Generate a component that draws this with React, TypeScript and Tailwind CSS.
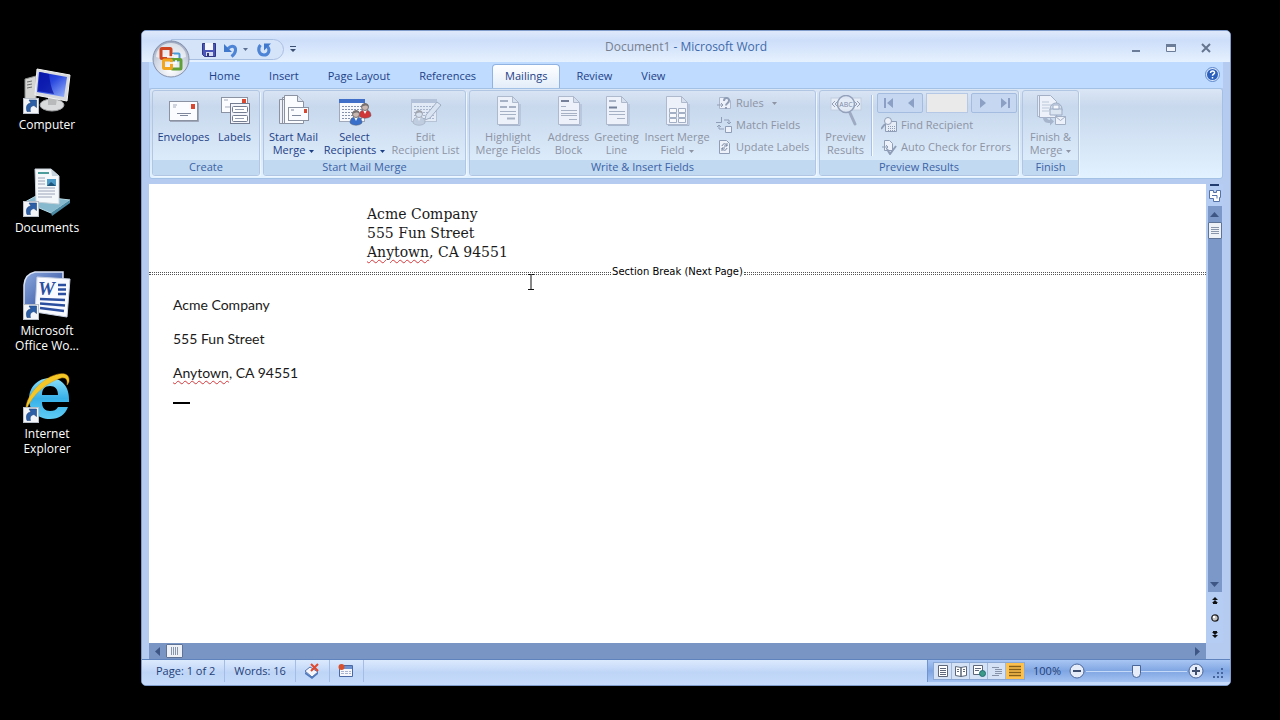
import type { ReactNode } from "react";

const tabs = ["Home", "Insert", "Page Layout", "References", "Mailings", "Review", "View"];

/* ---------- Desktop icons ---------- */

const desktop = { width: 48, height: 52, viewBox: "0 -4 48 52" };

function ShortcutArrow() {
  return (
    <g>
      <rect x="0.5" y="30.5" width="15" height="15" fill="#f2f4f8" stroke="#b9bfc9" />
      <path d="M4 43.500c-1.500-5 0-8 4-8.500l-2-3 7.500 0v7.500l-2.500-2c-3 .5-4.500 2.500-3.500 6z" fill="#2d5fa6" stroke="#1c4480" strokeWidth=".6" />
    </g>
  );
}

function ComputerIcon() {
  return (
    <svg {...desktop}>
      <defs>
        <linearGradient id="screen" x1="0" y1="0" x2="1" y2="1">
          <stop offset="0" stopColor="#0b1cc4" />
          <stop offset=".45" stopColor="#2a49df" />
          <stop offset="1" stopColor="#9db8fb" />
        </linearGradient>
      </defs>
      <path d="M2 11l11-3v28l-11 2z" fill="#d5d6d4" stroke="#8c8e8e" />
      <path d="M4 14l5-1M4 17l5-1M4 20l5-1" stroke="#6d6f70" />
      <ellipse cx="29" cy="37" rx="12" ry="6" fill="#d9dadb" stroke="#9fa1a3" />
      <path d="M25 28l9 2-1 7h-8z" fill="#b7b9bb" />
      <path d="M14 1l33 6-3 26-32-6z" fill="#d8dadd" stroke="#f4f4f4" />
      <path d="M16 4l28 5-3 20-27-5z" fill="url(#screen)" />
      <path d="M17 4l9 2c1 8 2 14 5 20l-16-3z" fill="#0711a0" opacity=".75" />
      <ShortcutArrow />
    </svg>
  );
}

function DocumentsIcon() {
  return (
    <svg {...desktop}>
      <g transform="translate(0 -3)">
        <path d="M2 34l11-6 34 4-19 13z" fill="#86b9cd" stroke="#b6dbe8" />
        <path d="M28 45l19-13v3l-18 13z" fill="#4c8ba6" />
        <path d="M12 1h16l8 7v28l-23-2z" fill="#f5f8fb" stroke="#c5d0d9" />
        <path d="M28 1l1 7h7z" fill="#c4d2dd" />
        <path d="M15 5h11" stroke="#4d9c9c" strokeWidth="2" />
        <path d="M15 10h7M15 13h7M15 16h7M15 20h17M15 23h17M15 26h17M15 29h14" stroke="#9aa4b8" />
        <rect x="24" y="11" width="9" height="7" fill="#4c9ac8" />
        <path d="M24 18l4-4 5 4z" fill="#1e5578" />
      </g>
      <ShortcutArrow />
    </svg>
  );
}

function WordIcon() {
  return (
    <svg {...desktop}>
      <defs>
        <linearGradient id="wordBack" x1="0" y1="0" x2="1" y2="1">
          <stop offset="0" stopColor="#8ea9df" />
          <stop offset="1" stopColor="#1d3f91" />
        </linearGradient>
      </defs>
      <g transform="translate(0 -3)">
        <path d="M12 1h28v40H1V14Q2 3 12 1z" fill="url(#wordBack)" stroke="#dbe4f5" strokeWidth="1.5" />
        <path d="M14 6l33 2-3 38-32-5z" fill="#f8faff" stroke="#c6d0e2" />
        <text x="15" y="24" fontFamily="Liberation Serif, serif" fontWeight="700" fontStyle="italic" fontSize="19" fill="#2b4f9e">W</text>
        <path d="M35 14h8M35 18.500h8M35 23h8M17 28l25 1M17 32.500l25 2M17 37l24 3" stroke="#2b4f9e" strokeWidth="2.5" />
      </g>
      <ShortcutArrow />
    </svg>
  );
}

function ExplorerIcon() {
  return (
    <svg {...desktop}>
      <defs>
        <linearGradient id="ie" x1="0" y1="0" x2="0" y2="1">
          <stop offset="0" stopColor="#8ae0fb" />
          <stop offset=".5" stopColor="#37b0e8" />
          <stop offset="1" stopColor="#5fcdf5" />
        </linearGradient>
      </defs>
      <g transform="translate(0 -4)">
        <path d="M46 29H19c0 6 3 9 8 9 4 0 6-1 8-4h10c-3 8-9 12-18 12C15 46 6 38 6 26S15 5 27 5s20 9 19 24zM19 22h16c0-6-3-9-8-9s-8 3-8 9z" fill="url(#ie)" />
        <path d="M3 37C2 27 12 12 27 4c10-5 20-5 19 4 0 1-1 3-2 4 1-5-1-8-6-7C25 9 10 20 3 37z" fill="#f5c726" stroke="#d99a12" strokeWidth=".5" />
      </g>
      <ShortcutArrow />
    </svg>
  );
}

function DesktopIcon({ icon, children }: { icon: ReactNode; children: ReactNode }) {
  return (
    <button className="flex h-[103px] w-[94px] flex-col items-center text-[12px] leading-[15px] text-white">
      {icon}
      <span className="mt-px">{children}</span>
    </button>
  );
}

/* ---------- Ribbon icons ---------- */

function EnvelopeIcon() {
  return (
    <svg width="32" height="32" viewBox="0 0 32 32">
      <rect x="1.5" y="6.5" width="28" height="19" fill="#fbfcff" stroke="#8b93a3" />
      <path d="M2 26.500h28.500V8" fill="none" stroke="#7e8696" opacity=".6" />
      <path d="M5 10h4M5 12h3" stroke="#a3abbb" />
      <rect x="23" y="9" width="4" height="5" fill="#d9472f" />
      <path d="M9 18.500h14M12 20.500h8" stroke="#7e879b" />
    </svg>
  );
}

function LabelsIcon() {
  return (
    <svg width="32" height="32" viewBox="0 0 32 32">
      <rect x="2.5" y="2.5" width="26" height="15" fill="#fbfcff" stroke="#8b93a3" />
      <rect x="23" y="4" width="4" height="4" fill="#d9472f" />
      <path d="M5 5h4M6 12h5" stroke="#a3abbb" />
      <rect x="11.5" y="8.5" width="19" height="20" fill="#f3f5fb" stroke="#737c90" />
      <rect x="13.5" y="11.5" width="15" height="6" rx="1" fill="#fff" stroke="#737c90" />
      <rect x="13.5" y="20.5" width="15" height="6" rx="1" fill="#fff" stroke="#737c90" />
      <path d="M16 14.500h9M16 23.500h9" stroke="#959eb0" />
    </svg>
  );
}

function MergeIcon() {
  return (
    <svg width="32" height="32" viewBox="0 0 32 32">
      <path d="M1.500 4.500h6v24h-6zM4.500 2.500h6v26h-6z" fill="#eef2f8" stroke="#8b93a3" />
      <path d="M6.500.5h13l6 6v22h-19z" fill="#fbfcff" stroke="#8b93a3" />
      <path d="M19.500.5v6h6" fill="#dbe3ee" stroke="#8b93a3" />
      <rect x="10.5" y="12.5" width="20" height="13" fill="#fbfcff" stroke="#8b93a3" />
      <rect x="26" y="14" width="3" height="4" fill="#d9472f" />
      <path d="M14 20.500h9M13 15h3" stroke="#7e879b" />
    </svg>
  );
}

function Person({ x, y, shirt, head }: { x: number; y: number; shirt: string; head: string }) {
  return (
    <g transform={`translate(${x} ${y})`}>
      <path d="M0 13C0 8 3 7 6 7s6 1 6 6c-3 3-9 3-12 0z" fill={shirt} stroke="#5b6273" strokeWidth=".5" />
      <path d="M4 7l2 4 2-4z" fill="#fff" />
      <circle cx="6" cy="4" r="3.5" fill={head} stroke="#5d5a5c" strokeWidth=".8" />
      <path d="M2.500 4C2 0 10-1 9.500 4 8 2 5 2 2.500 4z" fill="#77706e" />
    </g>
  );
}

function TableSheet({ bar }: { bar: string }) {
  return (
    <g>
      <rect x="1.5" y="4.5" width="25" height="22" fill="#f7f9fd" stroke="#a0a9ba" />
      <rect x="1" y="4" width="26" height="4" fill={bar} />
      <path d="M4 11.500h20M4 14.500h20M4 17.500h20M4 20.500h20M4 23.500h20" stroke="#8591ac" strokeDasharray="2 1" />
    </g>
  );
}

function RecipientsIcon() {
  return (
    <svg width="34" height="32" viewBox="0 0 34 32">
      <TableSheet bar="#3f6fc8" />
      <Person x={21} y={8} shirt="#cf3638" head="#c9b8b2" />
      <Person x={12} y={15} shirt="#376fcb" head="#c9b8b2" />
    </svg>
  );
}

function EditListIcon() {
  return (
    <svg width="32" height="32" viewBox="0 0 32 32" opacity=".5">
      <TableSheet bar="#9aa9c4" />
      <Person x={3} y={15} shirt="#b3bed2" head="#e3e8f0" />
      <path d="M16 20l11-13 4 3-11 13-5 2z" fill="#e9eef6" stroke="#76829a" />
    </svg>
  );
}

function PageIcon({ kind }: { kind: "highlight" | "address" | "greeting" | "insert" }) {
  return (
    <svg width="32" height="32" viewBox="0 0 32 32">
      <path d="M7 30.500h21V9" fill="none" stroke="#8f9db7" opacity=".6" />
      <path d="M5.500 1.500h15l6 6v22h-21z" fill="#edf2fa" stroke="#aeb9cd" />
      <path d="M20.500 1.500v6h6z" fill="#d5dfee" stroke="#aeb9cd" />
      {kind === "highlight" && (
        <g stroke="#a7b1c5">
          <path d="M8 6h8M8 12h7M17 12h7M15 23.500h8" strokeWidth="2" />
          <path d="M8 16.500h16M8 19.500h16" />
        </g>
      )}
      {kind === "address" && (
        <g stroke="#a7b1c5">
          <path d="M8 6h8" stroke="#74809a" strokeWidth="2" />
          <path d="M8 11.500h5M8 15.500h16M8 18.500h16M8 20.500h16M16 24.500h8" />
        </g>
      )}
      {kind === "greeting" && (
        <g stroke="#a7b1c5">
          <path d="M8 6h7" strokeWidth="2" />
          <path d="M8 12.500h8" stroke="#74809a" strokeWidth="2" />
          <path d="M8 16.500h16M8 19.500h16M16 23.500h8" />
        </g>
      )}
      {kind === "insert" && (
        <g fill="#f7f9fd" stroke="#a3afc5">
          <path d="M8.500 13.500h7v4h-7zM17.500 13.500h7v4h-7zM8.500 18.500h7v4h-7zM17.500 18.500h7v4h-7zM8.500 23.500h7v4h-7zM17.500 23.500h7v4h-7z" />
        </g>
      )}
    </svg>
  );
}

function PreviewIcon() {
  return (
    <svg width="32" height="32" viewBox="0 0 32 32">
      <rect x="1" y="3" width="30" height="12" fill="#e6edf7" stroke="#c2cee0" />
      <path d="M5 6l-3 3 3 3M8 6l-3 3 3 3M24 6l3 3-3 3M27 6l3 3-3 3" fill="none" stroke="#93a0b8" />
      <path d="M20 18l5 11" stroke="#9daac2" strokeWidth="3" strokeLinecap="round" />
      <circle cx="16" cy="9" r="8.5" fill="#e2eaf6" fillOpacity=".8" stroke="#93a1bb" strokeWidth="1.5" />
      <text x="16" y="12" textAnchor="middle" fontSize="7" fill="#7d8aa5">ABC</text>
    </svg>
  );
}

function FinishIcon() {
  return (
    <svg width="32" height="32" viewBox="0 0 32 32">
      <path d="M2.500.5h6v21h-6z" fill="#e6edf7" stroke="#a9b6cc" />
      <path d="M4.500.5h11l6 6v16h-17z" fill="#edf2fa" stroke="#a3afc5" />
      <path d="M7 7h7M7 10h10M7 13h7M7 16h7" stroke="#bac5d8" />
      <circle cx="21" cy="14" r="6" fill="#d3deed" stroke="#9cabc4" />
      <path d="M15 14h12v6H15z" fill="#dbe4f1" stroke="#9cabc4" />
      <path d="M18 10h6v4h-6z" fill="#f5f8fc" stroke="#9cabc4" />
      <path d="M20.500 21.500h10v8h-10z" fill="#edf2fa" stroke="#a3afc5" />
      <path d="M20.500 21.500l5 4 5-4" fill="none" stroke="#a3afc5" />
      <path d="M8 22c0 5 3 6 7 6v2.500l4-4-4-4V25c-2 0-3-1-3-3z" fill="#a6b4cc" />
    </svg>
  );
}

const small = { width: 16, height: 16, viewBox: "0 0 16 16", fill: "none", stroke: "#8f9db7" };

function RulesIcon() {
  return (
    <svg {...small}>
      <path d="M3.500 2.500h8l3 3v8h-11z" fill="#edf2fa" stroke="#aab6cb" />
      <path d="M8 6c0-4 5-4 5-.5 0 3-3 2.500-3 5M10 12v2" strokeWidth="2" />
      <path d="M1 10h6M5 8l2 2-2 2" />
    </svg>
  );
}

function MatchIcon() {
  return (
    <svg {...small}>
      <path d="M0 5.500h5.500V0M8 3h5v3M11 5l2 2 2-2M8 12H3V9M1 10l2-2 2 2" />
      <path d="M9.500 9.500h6v6h-6z" fill="#edf2fa" />
    </svg>
  );
}

function UpdateIcon() {
  return (
    <svg {...small}>
      <path d="M3.500 1.500h7l3 3v10h-10z" fill="#edf2fa" />
      <path d="M6 7c1-3 4-3 5 0M11 4v3H8M11 9c-1 3-4 3-5 0M6 12V9h3" stroke="#7685a3" />
    </svg>
  );
}

function FindIcon() {
  return (
    <svg {...small}>
      <path d="M4.500 4.500h11v10h-11z" fill="#e7edf7" />
      <path d="M7 9.500h8M7 11.500h8M7 13.500h8" strokeDasharray="1 1" />
      <circle cx="7" cy="4" r="3.5" fill="#edf2fa" />
      <path d="M4 7l-4 5" strokeWidth="2" />
    </svg>
  );
}

function CheckIcon() {
  return (
    <svg {...small}>
      <path d="M3.500 1.500h5l3 3v7h-8z" fill="#edf2fa" />
      <path d="M1 8h6M5 6l2 2-2 2" />
      <path d="M6 10l3 5 6-8" strokeWidth="2" />
    </svg>
  );
}

function Caret() {
  return (
    <svg className="ml-1 inline-block align-middle" width="5" height="3" viewBox="0 0 5 3">
      <path d="M0 0h5L2.500 3z" fill="currentColor" />
    </svg>
  );
}

/* ---------- Ribbon parts ---------- */

interface BigButtonProps {
  icon: ReactNode;
  lines: string[];
  width: string;
  menu?: boolean;
  disabled?: boolean;
}

function BigButton({ icon, lines, width, menu, disabled }: BigButtonProps) {
  return (
    <button
      disabled={disabled}
      className={`flex shrink-0 flex-col items-center pt-1 leading-[13px] whitespace-nowrap ${width} ${
        disabled ? "text-[#8d94a4]" : "text-[#1d4187]"
      }`}
    >
      {icon}
      <span className="mt-[3px] block">{lines[0]}</span>
      {lines[1] && (
        <span className="block">
          {lines[1]}
          {menu && <Caret />}
        </span>
      )}
    </button>
  );
}

function SmallButton({ icon, label, menu }: { icon: ReactNode; label: string; menu?: boolean }) {
  return (
    <button disabled className="flex h-[22px] items-center gap-1 whitespace-nowrap text-[#8d94a4]">
      {icon}
      <span>{label}</span>
      {menu && <Caret />}
    </button>
  );
}

function Group({ title, width, children }: { title: string; width: string; children: ReactNode }) {
  return (
    <section
      className={`flex shrink-0 flex-col overflow-hidden rounded-[3px] border border-[#b0c6e3] shadow-[1px_1px_0_#eef6ff] ${width}`}
    >
      <div className="flex h-[69px]">{children}</div>
      <h2 className="h-[15px] bg-[#c1d9f1] text-center leading-[14px] text-[#3c63a6]">{title}</h2>
    </section>
  );
}

function NavButton({ label, d }: { label: string; d: string }) {
  return (
    <button disabled aria-label={label} className="flex h-[18px] w-[22px] items-center justify-center">
      <svg width="12" height="12" viewBox="0 0 12 12">
        <path d={d} fill="#8ba0c4" />
      </svg>
    </button>
  );
}

function Ribbon() {
  return (
    <div className="flex h-[91px] gap-[3px] rounded-[3px] border border-[#a3c0e5] bg-linear-to-b from-[#dbe6f5] from-0% via-[#c8d8ed] via-20% to-[#e3f2ff] px-[2px] pt-px pb-[2px]">
      <Group title="Create" width="w-[108px]">
        <BigButton icon={<EnvelopeIcon />} lines={["Envelopes"]} width="w-[61px]" />
        <BigButton icon={<LabelsIcon />} lines={["Labels"]} width="w-[41px]" />
      </Group>
      <Group title="Start Mail Merge" width="w-[203px]">
        <BigButton icon={<MergeIcon />} lines={["Start Mail", "Merge"]} width="w-[59px]" menu />
        <BigButton icon={<RecipientsIcon />} lines={["Select", "Recipients"]} width="w-[63px]" menu />
        <BigButton icon={<EditListIcon />} lines={["Edit", "Recipient List"]} width="w-[79px]" disabled />
      </Group>
      <Group title="Write & Insert Fields" width="w-[347px]">
        <BigButton icon={<PageIcon kind="highlight" />} lines={["Highlight", "Merge Fields"]} width="w-[76px]" disabled />
        <BigButton icon={<PageIcon kind="address" />} lines={["Address", "Block"]} width="w-[45px]" disabled />
        <BigButton icon={<PageIcon kind="greeting" />} lines={["Greeting", "Line"]} width="w-[51px]" disabled />
        <BigButton icon={<PageIcon kind="insert" />} lines={["Insert Merge", "Field"]} width="w-[70px]" menu disabled />
        <div className="ml-1 flex flex-col pt-px">
          <SmallButton icon={<RulesIcon />} label="Rules" menu />
          <SmallButton icon={<MatchIcon />} label="Match Fields" />
          <SmallButton icon={<UpdateIcon />} label="Update Labels" />
        </div>
      </Group>
      <Group title="Preview Results" width="w-[200px]">
        <BigButton icon={<PreviewIcon />} lines={["Preview", "Results"]} width="w-[51px]" disabled />
        <div className="my-1 border-r border-l border-r-white/80 border-l-[#a9c2e2]" />
        <div className="ml-1 flex flex-col pt-px">
          <div className="flex h-[22px] items-center gap-[3px]">
            <div className="flex rounded-[2px] border border-[#a3bce0] bg-[#c6d8f1]">
              <NavButton label="First record" d="M1 1h2v10H1zM10 1v10L4 6z" />
              <NavButton label="Previous record" d="M9 1v10L3 6z" />
            </div>
            <input
              aria-label="Record"
              disabled
              className="h-5 w-[42px] border border-[#b5c9e6] bg-[#eaeaea]"
            />
            <div className="flex rounded-[2px] border border-[#a3bce0] bg-[#c6d8f1]">
              <NavButton label="Next record" d="M3 1v10l6-5z" />
              <NavButton label="Last record" d="M9 1h2v10H9zM2 1v10l6-5z" />
            </div>
          </div>
          <div className="flex flex-col items-start pl-1">
            <SmallButton icon={<FindIcon />} label="Find Recipient" />
            <SmallButton icon={<CheckIcon />} label="Auto Check for Errors" />
          </div>
        </div>
      </Group>
      <Group title="Finish" width="w-[57px]">
        <BigButton icon={<FinishIcon />} lines={["Finish &", "Merge"]} width="w-[55px]" menu disabled />
      </Group>
    </div>
  );
}

/* ---------- Title bar ---------- */

function OfficeButton() {
  return (
    <button aria-label="Office Button" className="absolute top-[9px] left-[10px]">
      <svg width="38" height="38" viewBox="0 0 38 38">
        <defs>
          <radialGradient id="orb" cx=".5" cy=".8" r=".8">
            <stop offset="0" stopColor="#ffffff" />
            <stop offset=".55" stopColor="#d3d9e5" />
            <stop offset="1" stopColor="#9aa6bd" />
          </radialGradient>
        </defs>
        <circle cx="19" cy="19" r="18" fill="url(#orb)" stroke="#8591ab" />
        <path d="M4 17a15 14 0 0 1 30 0q-15 5-30 0z" fill="#fff" opacity=".6" />
        <g fill="none">
          <rect x="20.5" y="13.500" width="7" height="7" rx="1" stroke="#4a9bd9" strokeWidth="2" />
          <rect x="9" y="8.5" width="10" height="10" rx="1" stroke="#cf4420" strokeWidth="3" />
          <rect x="19.5" y="19.5" width="9.5" height="9.5" rx="1" stroke="#5f9f36" strokeWidth="3" />
          <rect x="11.5" y="20" width="8" height="8.500" rx="1" stroke="#f2a51e" strokeWidth="3" />
          <path d="M15 17h6v-3M18 23h6v-3" stroke="#fff" strokeWidth="1.5" />
        </g>
      </svg>
    </button>
  );
}

function TitleBar() {
  return (
    <header className="grid h-[31px] grid-cols-[1fr_auto_1fr] bg-linear-to-b from-[#dfe9fb] from-0% via-[#cddefa] via-30% to-[#e6f1fe] text-[12px]">
      <div className="flex items-center pt-[6px] pl-[29px]">
        <div className="flex h-[21px] items-center rounded-r-full border border-[#a9bfe2] bg-[#d6e4f9] pr-[11px] pl-[29px]">
          <button aria-label="Save">
            <svg width="16" height="16" viewBox="0 0 16 16">
              <path d="M1.500 1.500h13v13h-11l-2-2z" fill="#4a55b8" stroke="#2f3785" />
              <path d="M4 1h8v7H4z" fill="#f4f6fc" />
              <path d="M5 10h7v4H5z" fill="#d7dbee" />
              <path d="M6 11h2v3H6z" fill="#2f3785" />
            </svg>
          </button>
          <button aria-label="Undo" className="ml-[6px]">
            <svg width="16" height="16" viewBox="0 0 16 16">
              <path d="M5 6.500c4-4 8-2 7.500 2-.3 2.500-2 4.500-4 6" fill="none" stroke="#4d84d6" strokeWidth="3" />
              <path d="M1 2v8h8z" fill="#3f78cc" />
            </svg>
          </button>
          <button aria-label="Undo history" className="ml-1 text-[#5b6f93]">
            <svg width="5" height="3" viewBox="0 0 5 3">
              <path d="M0 0h5L2.500 3z" fill="currentColor" />
            </svg>
          </button>
          <button aria-label="Repeat" className="ml-2">
            <svg width="16" height="16" viewBox="0 0 16 16">
              <path d="M4.500 3C1 7 3 13 8 13c4.500 0 6.500-5 3.500-8.500" fill="none" stroke="#4d84d6" strokeWidth="3" />
              <path d="M8 1.500h7L8 8.500z" fill="#3f78cc" />
            </svg>
          </button>
        </div>
        <button aria-label="Customize Quick Access Toolbar" className="ml-[6px]">
          <svg width="6" height="7" viewBox="0 0 6 7" fill="#3b4f73">
            <path d="M0 0h6v1H0zM0 3h6L3 6z" />
          </svg>
        </button>
      </div>
      <h1 className="pt-[7px] leading-[18px] text-[#3e6aaa]">
        <span className="text-[#77808f]">Document1</span> - Microsoft Word
      </h1>
      <div className="flex justify-end pt-[3px] pr-[7px]">
        <button aria-label="Minimize" className="flex w-[35px] items-center justify-center">
          <svg width="12" height="12" viewBox="0 0 12 12"><path d="M2 8h8v2H2z" fill="#6b7c99" /></svg>
        </button>
        <button aria-label="Restore" className="flex w-[35px] items-center justify-center">
          <svg width="12" height="12" viewBox="0 0 12 12"><path d="M1.500 3v6.500h9V3z" fill="#eef3fb" stroke="#6b7c99" /><path d="M1 2h10v3H1z" fill="#6b7c99" /></svg>
        </button>
        <button aria-label="Close" className="flex w-[35px] items-center justify-center">
          <svg width="12" height="12" viewBox="0 0 12 12"><path d="M2 2l8 8M10 2l-8 8" stroke="#66758f" strokeWidth="2" /></svg>
        </button>
      </div>
    </header>
  );
}

function TabRow() {
  return (
    <nav className="flex h-[26px] items-end bg-[#bfdbff] pr-[3px] pl-[47px]">
      {tabs.map((tab) => (
        <a
          key={tab}
          href="#"
          className={`mr-[3px] h-6 rounded-t-[4px] border border-b-0 px-3 leading-[22px] whitespace-nowrap text-[#1d4187] ${
            tab === "Mailings" ? "border-[#90b3e2] bg-linear-to-b from-white to-[#e3edf9]" : "border-transparent"
          }`}
        >
          {tab}
        </a>
      ))}
      <button aria-label="Help" className="mb-[6px] ml-auto">
        <svg width="15" height="15" viewBox="0 0 15 15">
          <circle cx="7.5" cy="7.5" r="7" fill="#dce9fb" stroke="#5c87cc" />
          <circle cx="7.5" cy="7.5" r="5.5" fill="#2c60bd" />
          <path d="M5.500 6c0-3 4.500-2.500 4 0-.3 1.200-2 1.300-2 2.800M7.500 10v1.500" fill="none" stroke="#fff" strokeWidth="1.5" />
        </svg>
      </button>
    </nav>
  );
}

/* ---------- Document ---------- */

function Misspelled({ children }: { children: ReactNode }) {
  return <span className="underline decoration-[#d8363a] decoration-wavy decoration-1 underline-offset-2">{children}</span>;
}

function DocumentPage() {
  return (
    <main className="relative min-w-0 flex-1 bg-white pt-[21px] text-[#1a1a1a]">
      <div className="pl-[218px] font-['DejaVu_Serif',serif] text-[14px] leading-[19px]">
        <p>Acme Company</p>
        <p>555 Fun Street</p>
        <p><Misspelled>Anytown</Misspelled>, CA 94551</p>
      </div>
      <div className="mt-[3px] flex items-center text-[10px] leading-[14px] text-black">
        <div className="mt-[3px] h-[3px] flex-1 border-y border-dotted border-[#555]" />
        <span className="px-px font-['DejaVu_Sans',sans-serif]">Section Break (Next Page)</span>
        <div className="mt-[3px] h-[3px] flex-1 border-y border-dotted border-[#555]" />
      </div>
      <div className="flex flex-col gap-4 pt-[17px] pl-6 font-[Lato,sans-serif] text-[14px] leading-[18px]">
        <p>Acme Company</p>
        <p>555 Fun Street</p>
        <p><Misspelled>Anytown</Misspelled>, CA 94551</p>
      </div>
      <div className="mt-5 ml-6 h-[2px] w-[17px] bg-black" />
      {/* mouse pointer */}
      <svg className="absolute top-[90px] left-[378px]" width="8" height="16" viewBox="0 0 8 16">
        <path d="M1 .5h2.500L4 1l.5-.5H7M4 1v14M1 15.500h6" fill="none" stroke="#111" />
      </svg>
    </main>
  );
}

function VerticalScroll() {
  return (
    <aside className="flex w-[17px] flex-col items-center bg-[#b5cdf3]">
      <button aria-label="Split" className="h-[2px] w-[9px] shrink-0 bg-[#223c70]" />
      <button aria-label="View Ruler" className="my-[3px]">
        <svg width="14" height="14" viewBox="0 0 14 14">
          <path d="M1.500 1.500h4v2h3v-2h4v7h-1v4h-6v-3h-4z" fill="#fff" stroke="#5673a8" />
          <path d="M4 6.500h5v3" fill="none" stroke="#5673a8" />
        </svg>
      </button>
      <div className="flex w-[14px] flex-1 flex-col items-center bg-[#7c98c8]">
        <button aria-label="Scroll up" className="flex h-4 w-full shrink-0 items-center justify-center">
          <svg width="9" height="5" viewBox="0 0 9 5"><path d="M0 5h9L4.500 0z" fill="#3d5684" /></svg>
        </button>
        <div className="flex h-[17px] w-[14px] flex-col justify-center gap-px rounded-[1px] border border-[#5f7396] bg-[#eef1f6] px-[2px]">
          <i className="h-px bg-[#8995aa]" /><i className="h-px bg-[#8995aa]" />
          <i className="h-px bg-[#8995aa]" /><i className="h-px bg-[#8995aa]" />
        </div>
        <button aria-label="Scroll down" className="mt-auto flex h-4 w-full items-center justify-center">
          <svg width="9" height="5" viewBox="0 0 9 5"><path d="M0 0h9L4.500 5z" fill="#3d5684" /></svg>
        </button>
      </div>
      <button aria-label="Previous Page" className="flex h-[17px] items-center">
        <svg width="6" height="7" viewBox="0 0 6 7"><path d="M3 0l3 3H0zM3 3l3 3H0zM1 6h4v1H1z" fill="#111" /></svg>
      </button>
      <button aria-label="Select Browse Object" className="flex h-[17px] items-center">
        <svg width="8" height="8" viewBox="0 0 8 8"><circle cx="4" cy="4" r="3.2" fill="#c5c5c5" stroke="#222" strokeWidth="1.3" /><circle cx="3" cy="3" r="1.2" fill="#fff" /></svg>
      </button>
      <button aria-label="Next Page" className="flex h-[17px] items-center">
        <svg width="6" height="7" viewBox="0 0 6 7"><path d="M3 7l3-3H0zM3 4l3-3H0zM1 0h4v1H1z" fill="#111" /></svg>
      </button>
    </aside>
  );
}

function HorizontalScroll() {
  return (
    <div className="mr-[17px] flex h-4 items-center bg-[#7995c4]">
      <button aria-label="Scroll left" className="flex w-[17px] justify-center">
        <svg width="5" height="9" viewBox="0 0 5 9"><path d="M5 0v9L0 4.500z" fill="#3d5684" /></svg>
      </button>
      <div className="flex h-[14px] w-[17px] items-center justify-center gap-px rounded-[1px] border border-[#5f7396] bg-[#eef1f6]">
        <i className="h-2 w-px bg-[#8995aa]" /><i className="h-2 w-px bg-[#8995aa]" />
        <i className="h-2 w-px bg-[#8995aa]" /><i className="h-2 w-px bg-[#8995aa]" />
      </div>
      <button aria-label="Scroll right" className="ml-auto flex w-[17px] justify-center">
        <svg width="5" height="9" viewBox="0 0 5 9"><path d="M0 0v9l5-4.500z" fill="#3d5684" /></svg>
      </button>
    </div>
  );
}

/* ---------- Status bar ---------- */

function ViewIcon({ index }: { index: number }) {
  return (
    <svg width="14" height="12" viewBox="0 0 14 12" fill="none" stroke="#5d6779">
      {index === 0 && <path d="M2.500.5h9v11h-9zM4 3.500h6M4 5.500h6M4 7.500h6M4 9.500h6" fill="#fff" />}
      {index === 1 && <path d="M1.500 1.500l5.500 1v9l-5.500-1zM12.500 1.500l-5.500 1v9l5.500-1zM3 4.500h2M3 6.500h2M9 4.500h2M9 6.500h2" fill="#fff" />}
      {index === 2 && (
        <>
          <path d="M1.500.5h9v9h-9zM3 3.500h6M3 5.500h4" fill="#fff" />
          <circle cx="10.5" cy="8.5" r="3" fill="#3d9c88" stroke="#246a74" />
        </>
      )}
      {index === 3 && <path d="M2 2.500h7M5 4.500h7M5 6.500h7M5 8.500h7M2 10.500h7" stroke="#8793a9" />}
      {index === 4 && <path d="M1 1.500h12M1 4.500h12M1 7.500h12M1 10.500h12" stroke="#866019" strokeWidth="1.5" />}
    </svg>
  );
}

const views = ["Print Layout", "Full Screen Reading", "Web Layout", "Outline", "Draft"];

function StatusBar() {
  return (
    <footer className="flex h-[26px] border-t border-[#5f83bd] bg-linear-to-b from-[#dceafd] via-[#bfd5f7] to-[#c7dcfb] pb-[3px] text-[#1f3f78]">
      <div className="border-r border-[#a3bde6] pt-[2px] pr-[9px] pl-[14px] leading-[17px]">Page: 1 of 2</div>
      <div className="border-r border-[#a3bde6] px-[9px] pt-[2px] leading-[17px]">Words: 16</div>
      <button aria-label="Proofing errors" className="flex w-[34px] items-center justify-center border-r border-[#a3bde6]">
        <svg width="16" height="16" viewBox="0 0 16 16">
          <path d="M1 8l5-4 8 5-6 5z" fill="#f5f7fc" stroke="#5574ab" />
          <path d="M1 9l7 5 6-5v2l-6 5-7-5z" fill="#4f78bd" />
          <path d="M7 1l7 7M14 1L7 8" stroke="#e0492f" strokeWidth="2" />
        </svg>
      </button>
      <button aria-label="Record macro" className="flex w-[34px] items-center justify-center border-r border-[#a3bde6]">
        <svg width="16" height="16" viewBox="0 0 16 16">
          <path d="M1.500 2.500h13v11h-13z" fill="#f5f7fc" stroke="#4a68a3" />
          <path d="M2 3h12v3H2z" fill="#6e91d0" />
          <path d="M3 8.500h10M3 10.500h10" stroke="#a6b4d1" strokeDasharray="3 1" />
          <circle cx="3.5" cy="4" r="3" fill="#d5502f" />
        </svg>
      </button>
      <div className="ml-auto flex items-center border-l border-[#6f94d0] bg-linear-to-b from-[#a9c6f3] via-[#7fa5e2] to-[#a5c3f2] pr-[6px] pl-[5px]">
        <div className="flex border border-[#8aa6d3]">
          {views.map((view, i) => (
            <button
              key={view}
              aria-label={view}
              className={`flex h-4 w-[18px] items-center justify-center ${
                i === 4 ? "bg-[#fcc04e]" : "border-r border-[#a0b8dc] bg-[#d5e2f5]"
              }`}
            >
              <ViewIcon index={i} />
            </button>
          ))}
        </div>
        <span className="w-[44px] text-center">100%</span>
        <button aria-label="Zoom out">
          <svg width="16" height="16" viewBox="0 0 16 16">
            <circle cx="8" cy="8" r="7" fill="#e6edf8" stroke="#4a6599" />
            <path d="M4 8h8" stroke="#3e4f70" strokeWidth="2" />
          </svg>
        </button>
        <input
          type="range"
          aria-label="Zoom"
          min={0}
          max={100}
          defaultValue={50}
          className="mx-px h-4 w-[101px] appearance-none bg-transparent bg-[linear-gradient(#c4d8f7,#c4d8f7)] bg-[length:100%_1px] bg-center bg-no-repeat [&::-webkit-slider-thumb]:h-[13px] [&::-webkit-slider-thumb]:w-[9px] [&::-webkit-slider-thumb]:appearance-none [&::-webkit-slider-thumb]:rounded-b-[5px] [&::-webkit-slider-thumb]:border [&::-webkit-slider-thumb]:border-[#4a6599] [&::-webkit-slider-thumb]:bg-[#e6edf8]"
        />
        <button aria-label="Zoom in">
          <svg width="16" height="16" viewBox="0 0 16 16">
            <circle cx="8" cy="8" r="7" fill="#e6edf8" stroke="#4a6599" />
            <path d="M4 8h8M8 4v8" stroke="#3e4f70" strokeWidth="2" />
          </svg>
        </button>
        <svg className="mt-1 ml-2" width="12" height="12" viewBox="0 0 12 12">
          <path d="M9 1h2v2H9zM5 5h2v2H5zM9 5h2v2H9zM1 9h2v2H1zM5 9h2v2H5zM9 9h2v2H9z" fill="#46659e" />
        </svg>
      </div>
    </footer>
  );
}

export default function App() {
  return (
    <div className="flex min-h-screen bg-black font-['Open_Sans','Noto_Sans',sans-serif] text-[11px]">
      <div className="flex w-[94px] shrink-0 flex-col pt-16">
        <DesktopIcon icon={<ComputerIcon />}>Computer</DesktopIcon>
        <DesktopIcon icon={<DocumentsIcon />}>Documents</DesktopIcon>
        <DesktopIcon icon={<WordIcon />}>Microsoft<br />Office Wo...</DesktopIcon>
        <DesktopIcon icon={<ExplorerIcon />}>Internet<br />Explorer</DesktopIcon>
      </div>

      <div className="relative mt-[30px] mr-[49px] mb-[34px] ml-[47px] flex min-w-0 flex-1 flex-col overflow-hidden rounded-[5px] border border-[#7f9ccb] bg-[#b5cbf0]">
        <TitleBar />
        <div className="flex flex-1 flex-col px-[7px]">
          <TabRow />
          <Ribbon />
          <div className="mt-[5px] flex flex-1">
            <DocumentPage />
            <VerticalScroll />
          </div>
          <HorizontalScroll />
        </div>
        <StatusBar />
        <OfficeButton />
      </div>
    </div>
  );
}
